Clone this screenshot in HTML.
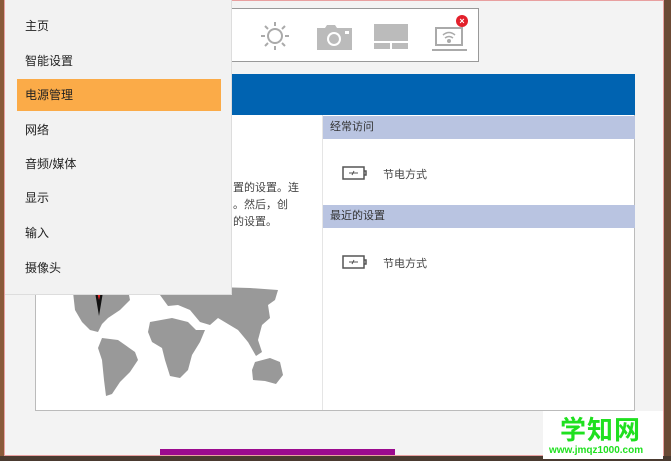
<!DOCTYPE html>
<html><head><meta charset="utf-8">
<style>
*{margin:0;padding:0;box-sizing:border-box}
body{width:671px;height:461px;overflow:hidden;background:#6b4a35;position:relative;font-family:"Liberation Sans","Noto Sans CJK SC",sans-serif}
.abs{position:absolute}
.win{left:4px;top:0;width:660px;height:456px;background:#f3f3f3;border:1px solid #e8a0a0}
.menu{left:5px;top:0;width:227px;height:295px;background:#f2f2f2;border-right:1px solid #ddd;border-bottom:1px solid #ddd}
.mi{position:absolute;left:20px;font-size:12px;color:#222;line-height:16px}
.hl{left:12px;top:79px;width:204px;height:32px;background:#fbab48}
.tool{left:232px;top:8px;width:247px;height:54px;background:#fff;border:1px solid #999;border-left:none}
.blue{left:35px;top:74px;width:600px;height:42px;background:#0063b1}
.content{left:35px;top:115px;width:600px;height:296px;background:#fff;border:1px solid #bbb;border-top:none}
.rcol{left:322px;top:115px;width:313px;height:295px;border-left:1px solid #e5e5e5}
.hdr{position:absolute;left:0;width:312px;height:23px;background:#b9c4e1;font-size:11px;color:#333;line-height:23px;padding-left:7px}
.it{position:absolute;left:60px;font-size:11px;color:#444}
.txt{font-size:11px;color:#444;line-height:17px}
</style></head><body>
<div class="abs" style="left:0;top:0;width:8px;height:461px;background:#8a5a3a"></div>
<div class="abs win"></div>
<div class="abs tool">
<svg class="abs" style="left:28px;top:12px" width="30" height="30" viewBox="0 0 30 30" fill="none" stroke="#aaa" stroke-width="2"><circle cx="15" cy="15" r="7"/><path d="M15 1v4M15 25v4M1 15h4M25 15h4M5 5l3 3M22 22l3 3M5 25l3-3M22 8l3-3"/></svg>
<svg class="abs" style="left:85px;top:15px" width="35" height="26" viewBox="0 0 35 26"><path d="M0 4h8l2-3h8l2 3h15v22H0z" fill="#bbb"/><circle cx="17" cy="15" r="7" fill="#fff"/><circle cx="17" cy="15" r="5" fill="#bbb"/><rect x="28" y="7" width="4" height="3" fill="#fff"/></svg>
<svg class="abs" style="left:142px;top:15px" width="34" height="26" viewBox="0 0 34 26" fill="#bbb"><rect x="0" y="0" width="34" height="17"/><rect x="0" y="19" width="16" height="6"/><rect x="18" y="19" width="16" height="6"/></svg>
<svg class="abs" style="left:200px;top:14px" width="35" height="30" viewBox="0 0 35 30" fill="none" stroke="#aaa" stroke-width="2"><rect x="4" y="5" width="26" height="17"/><path d="M0 27h35"/><path d="M11 12q6-5 12 0M13 15q4-3 8 0" stroke-width="1.5"/><circle cx="17" cy="18" r="1" fill="#aaa"/></svg>
<div class="abs" style="left:224px;top:6px;width:12px;height:12px;border-radius:6px;background:#e3202b;color:#fff;font-size:9px;line-height:12px;text-align:center;font-weight:bold">×</div>
</div>
<div class="abs blue"></div>
<div class="abs content">
<div class="abs txt" style="left:197px;top:65px">置的设置。连<br>。然后，创<br>的设置。</div>
</div>
<svg class="abs" style="left:0;top:0" width="671" height="461" fill="#999">
<path d="M73 292L100 288L128 290L130 300L120 310L108 318L102 324L98 332L90 330L82 322L75 310Z"/>
<path d="M102 338L118 340L135 352L138 360L130 372L120 382L112 394L106 396L104 380L102 360L98 348Z"/>
<path d="M160 295L185 290L215 287L250 288L278 290L275 300L268 305L270 318L262 325L258 340L262 352L256 356L248 342L238 330L228 324L218 318L210 325L200 322L190 310L178 305L168 306Z"/>
<path d="M150 322L172 318L188 322L196 330L205 330L200 342L192 355L188 370L180 378L170 376L165 360L162 348L152 342L148 332Z"/>
<path d="M255 362L270 358L280 362L283 375L276 384L265 381L253 380L252 370Z"/>
<path d="M240 330L252 332L258 340L248 342Z"/>
</svg>
<svg class="abs" style="left:95px;top:292px" width="8" height="24" viewBox="0 0 8 24"><path d="M0 0H8L4 24Z" fill="#111"/><path d="M2 0H6L4 8Z" fill="#e22"/></svg>
<div class="abs rcol">
<div class="hdr" style="top:1px">经常访问</div>
<svg class="abs" style="left:19px;top:51px" width="26" height="14" viewBox="0 0 26 14" fill="none" stroke="#555" stroke-width="1.5"><rect x="1" y="1" width="21" height="12"/><path d="M22 5h2v4h-2"/><path d="M7 7h9M12 5l-2 4" stroke-width="1"/></svg>
<div class="it" style="top:51px">节电方式</div>
<div class="hdr" style="top:90px">最近的设置</div>
<svg class="abs" style="left:19px;top:140px" width="26" height="14" viewBox="0 0 26 14" fill="none" stroke="#555" stroke-width="1.5"><rect x="1" y="1" width="21" height="12"/><path d="M22 5h2v4h-2"/><path d="M7 7h9M12 5l-2 4" stroke-width="1"/></svg>
<div class="it" style="top:140px">节电方式</div>
</div>
<div class="abs menu">
<div class="abs hl"></div>
<div class="mi" style="top:18px">主页</div>
<div class="mi" style="top:53px">智能设置</div>
<div class="mi" style="top:87px">电源管理</div>
<div class="mi" style="top:122px">网络</div>
<div class="mi" style="top:156px">音频/媒体</div>
<div class="mi" style="top:190px">显示</div>
<div class="mi" style="top:225px">输入</div>
<div class="mi" style="top:260px">摄像头</div>
</div>
<div class="abs" style="left:160px;top:449px;width:235px;height:6px;background:#9b0a8e"></div>
<div class="abs" style="left:0;top:456px;width:671px;height:5px;background:#4a3a30"></div>
<div class="abs" style="left:543px;top:411px;width:120px;height:48px;background:#fff">
<div class="abs" style="left:17px;top:4px;font-size:26px;font-weight:bold;color:#1fe01f;line-height:30px;letter-spacing:1px">学知网</div>
<div class="abs" style="left:6px;top:34px;font-size:10px;color:#1fe01f;font-weight:bold">www.jmqz1000.com</div>
</div>
</body></html>
